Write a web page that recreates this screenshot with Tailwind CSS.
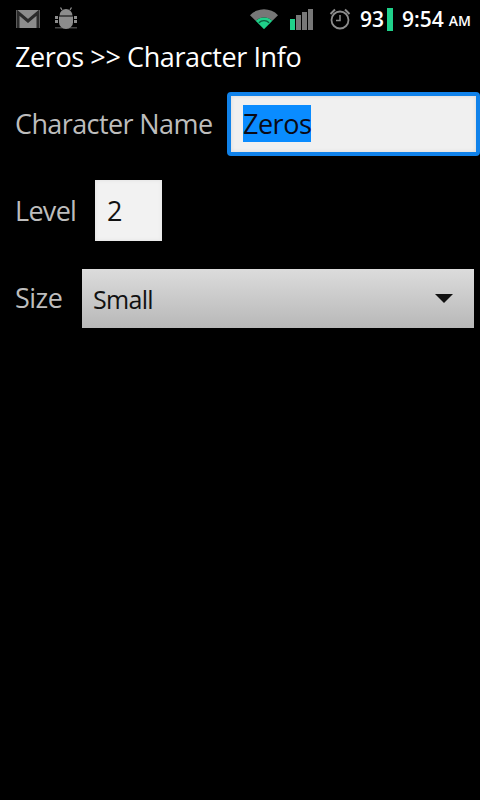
<!DOCTYPE html>
<html lang="en">
<head>
  <meta charset="UTF-8" />
  <meta name="viewport" content="width=device-width, initial-scale=1.0" />
  <title>Character Info</title>
  <script src="https://cdn.jsdelivr.net/npm/@tailwindcss/browser@4"></script>
</head>
<body class="bg-black font-['Open_Sans','Noto_Sans',sans-serif]">
  <div class="w-[480px] h-[800px] overflow-hidden bg-black">
    <!-- status bar -->
    <div class="h-[38px] flex items-center pl-[16px] pr-[9px] text-white">
      <svg class="w-[24px] h-[18px] mr-[14px]" viewBox="0 0 24 18">
        <rect width="24" height="18" fill="#8c8c8c" />
        <path d="M2 18V2.500L12 11L22 2.500V18" fill="none" stroke="#2b2b2b" stroke-width="3" />
      </svg>
      <svg class="w-[24px] h-[24px]" viewBox="0 0 24 24">
        <g fill="#8c8c8c">
          <path d="M5.500 8.500a6.500 6.500 0 0 1 13 0z" />
          <path d="M8 3L6.500 0.500M16 3l1.500-2.500" stroke="#8c8c8c" stroke-width="1.300" />
          <path d="M5 9.500h14v6a7 6.500 0 0 1-14 0z" />
          <rect x="1" y="9" width="3" height="3" />
          <rect x="1" y="13" width="3" height="3" />
          <rect x="20" y="9" width="3" height="3" />
          <rect x="20" y="13" width="3" height="3" />
          <rect x="1" y="20" width="22" height="1.500" opacity="0.500" />
        </g>
      </svg>
      <div class="ml-auto flex items-center">
        <svg class="w-[28px] h-[22px] -mt-[2px]" viewBox="0 0 30 22">
          <path d="M0 8a21 21 0 0 1 30 0L24 14a13 13 0 0 0-18 0z" fill="#777" />
          <path d="M6 14a13 13 0 0 1 18 0L15 23z" fill="#1fd18a" />
          <path d="M9.500 16a8 8 0 0 1 11 0" fill="none" stroke="#0c5c3d" stroke-width="1.500" />
        </svg>
        <div class="ml-[12px] flex items-end gap-[1px] h-[22px]">
          <div class="w-[5px] h-[11px] bg-[#1fd18a]"></div>
          <div class="w-[5px] h-[15px] bg-[#777]"></div>
          <div class="w-[5px] h-[18px] bg-[#777]"></div>
          <div class="w-[5px] h-[21px] bg-[#777]"></div>
        </div>
        <svg class="ml-[16px] w-[22px] h-[22px]" viewBox="0 0 22 22">
          <circle cx="11" cy="12" r="8.500" fill="none" stroke="#8c8c8c" stroke-width="1.800" />
          <path d="M11 7v5.500H7" fill="none" stroke="#8c8c8c" stroke-width="1.500" />
          <path d="M1.500 6L6 1.500M20.500 6L16 1.500" stroke="#8c8c8c" stroke-width="2" />
        </svg>
        <span class="ml-[9px] text-[21px] font-semibold leading-none">93</span>
        <div class="ml-[3px] w-[6px] h-[23px] bg-[#1fd18a]"></div>
        <span class="ml-[9px] text-[21px] font-semibold leading-none">9:54</span>
        <span class="ml-[5px] text-[14px] font-semibold leading-none mt-[3px]">AM</span>
      </div>
    </div>

    <!-- title -->
    <h1 class="pl-[15px] h-[38px] leading-[38px] text-[27px] tracking-[-0.4px] text-white whitespace-nowrap">Zeros &gt;&gt; Character Info</h1>

    <!-- form -->
    <div class="mt-[16px] flex items-center h-[64px] pl-[15px]">
      <label class="w-[197px] text-[27px] tracking-[-0.6px] text-[#bdbdbd] whitespace-nowrap">Character Name</label>
      <div class="ml-[15px] w-[253px] h-[64px] rounded-[4px] border-[4px] border-[#1082ea] bg-[#f0f0f0] shadow-[inset_0_0_4px_rgba(0,0,0,0.1)] pl-[12px] flex items-center">
        <span class="bg-[#0a8cff] text-[27px] tracking-[-0.5px] leading-[37px] text-[#0a0a14] -mt-[1px]">Zeros</span>
      </div>
    </div>
    <div class="mt-[24px] flex items-center h-[61px] pl-[15px]">
      <label class="w-[80px] pt-[2px] text-[27px] tracking-[-0.7px] text-[#bdbdbd]">Level</label>
      <div class="w-[67px] h-[61px] bg-[#f2f2f2] shadow-[inset_0_0_4px_rgba(0,0,0,0.08)] pl-[12px] pt-[2px] flex items-center text-[27px] text-[#111]">2</div>
    </div>
    <div class="mt-[28px] flex items-center h-[59px] pl-[15px]">
      <label class="w-[67px] text-[27px] tracking-[-0.5px] text-[#bdbdbd]">Size</label>
      <div class="w-[392px] h-[59px] bg-gradient-to-b from-[#dcdcdc] to-[#b8b8b8] pl-[11px] pr-[21px] flex items-center justify-between text-[25px] tracking-[-0.7px] text-[#111]">
        <span class="pt-[2px]">Small</span>
        <svg class="w-[18px] h-[9px]" viewBox="0 0 18 9"><path d="M0 0h18L9 9z" fill="#111" /></svg>
      </div>
    </div>
  </div>
</body>
</html>
